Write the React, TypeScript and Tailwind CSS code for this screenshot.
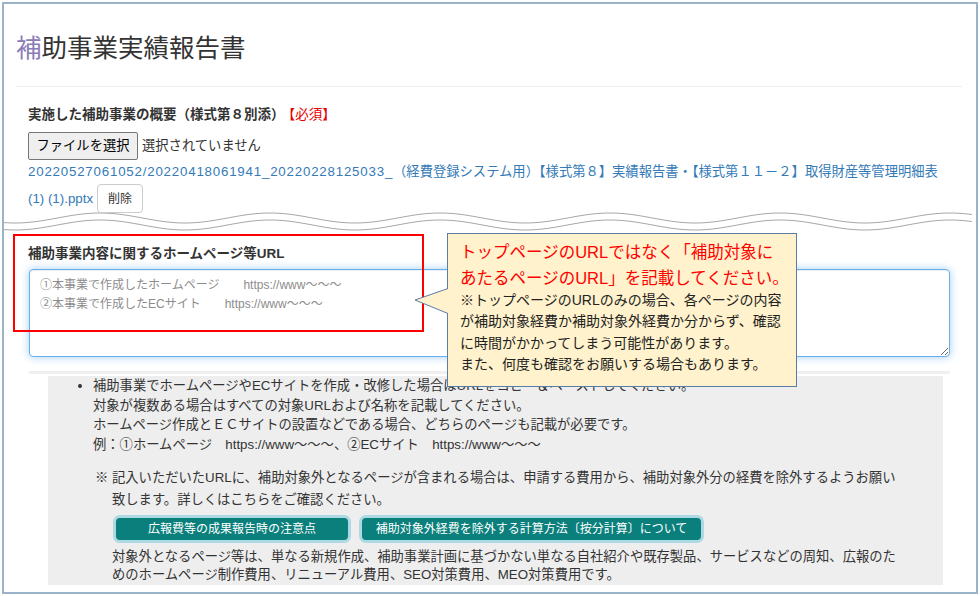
import React from 'react';

const wavePath = (y0: number) => {
  let d = '';
  for (let x = 0; x <= 968; x += 4) {
    const y = y0 - 5 * Math.sin((2 * Math.PI * (x + 4 - 57.5)) / 170);
    d += `${x === 0 ? 'M' : 'L'}${x} ${y.toFixed(2)} `;
  }
  return d;
};

const Callout = () => (
  <div className="absolute left-[443px] top-[229px] h-[154px] w-[350px] border border-[#5b7ca5] bg-[#fff2cc] pl-[12px] pt-[5px]">
    <svg className="absolute left-[-34px] top-[50px]" width="37" height="34" viewBox="0 0 37 34">
      <polygon points="37,4.5 34,4.5 1,16 34,29.5 37,29.5" fill="#fff2cc" />
      <polyline points="34,4.5 1,16 34,29.5" fill="none" stroke="#5b7ca5" strokeWidth="1" />
    </svg>
    <div className="whitespace-nowrap text-[16.5px] leading-[26px] text-[#ff0000]">
      トップページのURLではなく「補助対象に
      <br />
      あたるページのURL」を記載してください。
    </div>
    <div className="mt-[-1px] whitespace-nowrap text-[14px] leading-[21.3px] text-[#222]">
      ※トップページのURLのみの場合、各ページの内容
      <br />
      が補助対象経費か補助対象外経費か分からず、確認
      <br />
      に時間がかかってしまう可能性があります。
      <br />
      また、何度も確認をお願いする場合もあります。
    </div>
  </div>
);

export default function App() {
  return (
    <div className="h-[596px] w-[980px] overflow-hidden bg-white font-['Liberation_Sans','Noto_Sans_CJK_JP',sans-serif] text-[#333]">
      <div className="relative ml-[2px] mt-[2px] h-[592px] w-[976px] border-2 border-[#9ab3c9] bg-white">
        <div className="pl-[12px]">
          <h1 className="mt-[29px] text-[25.5px] leading-[30px] text-[#333]">
            <span className="text-[#8a7db8]">補</span>助事業実績報告書
          </h1>
          <div className="mt-[23px] h-px w-[946px] bg-[#eeeeee]" />

          <div className="pl-[12px]">
            <div className="mt-[18px] text-[13.5px] font-bold leading-[20px] text-[#333]">
              実施した補助事業の概要（様式第８別添）
              <span className="ml-[4px] font-normal text-[#e60000]">【必須】</span>
            </div>
            <div className="mt-[7px] flex h-[28px] items-center">
              <button className="h-[28px] w-[110px] rounded-[2px] border border-[#767676] bg-[#efefef] text-[13.3px] text-black">
                ファイルを選択
              </button>
              <span className="ml-[4px] text-[13.3px] text-[#333]">選択されていません</span>
            </div>
            <div className="mt-[2px] whitespace-nowrap text-[13.3px] leading-[20px] text-[#337ab7]">
              <span className="tracking-[0.8px]">20220527061052/20220418061941_20220228125033_</span>
              （経費登録システム用）【様式第８】実績報告書・【様式第１１－２】取得財産等管理明細表
            </div>
            <div className="mt-[2px] flex h-[29px] items-center">
              <span className="text-[13.3px] text-[#337ab7]">(1) (1).pptx</span>
              <button className="relative z-10 ml-[4px] h-[29px] w-[46px] rounded-[4px] border border-[#cccccc] bg-white text-[12px] text-[#333]">
                削除
              </button>
            </div>

            <div className="mt-[31px] text-[13.5px] font-bold leading-[20px] text-[#333]">
              補助事業内容に関するホームページ等URL
            </div>
            <textarea
              className="mt-[5px] ml-[1px] block h-[88px] w-[921px] rounded-[4px] border border-[#66afe9] px-[10px] py-[6px] text-[12px] leading-[19px] text-[#333] shadow-[inset_0_1px_1px_rgba(0,0,0,0.075),0_0_8px_rgba(102,175,233,0.6)] outline-none placeholder:text-[#8c8c8c]"
              placeholder={'①本事業で作成したホームページ　　https://www～～～\n②本事業で作成したECサイト　　https://www～～～'}
            />
            <div className="ml-[1px] mt-[14px] h-[3px] w-[921px] bg-[#f0f0f0]" />

            <div className="ml-[20px] mt-[2px] h-[209px] w-[895px] bg-[#eeeeee] text-[13.3px] text-[#333]">
              <ul className="list-disc pl-[45px] leading-[19.7px]">
                <li className="whitespace-nowrap">
                  補助事業でホームページやECサイトを作成・改修した場合はURLをコピー＆ペーストしてください。
                  <br />
                  対象が複数ある場合はすべての対象URLおよび名称を記載してください。
                  <br />
                  ホームページ作成とＥＣサイトの設置などである場合、どちらのページも記載が必要です。
                  <br />
                  例：①ホームページ　https://www～～～、②ECサイト　https://www～～～
                </li>
              </ul>
              <div className="pl-[64px]">
                <div className="mt-[12px] whitespace-nowrap indent-[-17px] leading-[22px]">
                  ※ 記入いただいたURLに、補助対象外となるページが含まれる場合は、申請する費用から、補助対象外分の経費を除外するようお願い
                  <br />
                  致します。詳しくはこちらをご確認ください。
                </div>
                <div className="mt-[4px] flex gap-[8px] pl-[1px]">
                  <button className="h-[28px] w-[238px] rounded-[7px] border-[3px] border-[#acd9e4] bg-[#0a7f7c] text-[12px] text-white">
                    広報費等の成果報告時の注意点
                  </button>
                  <button className="h-[28px] w-[345px] rounded-[7px] border-[3px] border-[#acd9e4] bg-[#0a7f7c] text-[12px] text-white">
                    補助対象外経費を除外する計算方法〔按分計算〕について
                  </button>
                </div>
                <div className="mt-[5px] whitespace-nowrap leading-[18.5px]">
                  対象外となるページ等は、単なる新規作成、補助事業計画に基づかない単なる自社紹介や既存製品、サービスなどの周知、広報のた
                  <br />
                  めのホームページ制作費用、リニューアル費用、SEO対策費用、MEO対策費用です。
                </div>
              </div>
            </div>
          </div>
        </div>

        <svg className="absolute left-0 top-[201px]" width="970" height="30" viewBox="0 0 970 30">
          <path d={wavePath(13)} fill="none" stroke="#a8a8a8" strokeWidth="1" />
          <path d={wavePath(20)} fill="none" stroke="#a8a8a8" strokeWidth="1" />
        </svg>

        <div className="absolute left-[9px] top-[230px] h-[98px] w-[411px] border-2 border-[#ff0000]" />

        <Callout />
      </div>
    </div>
  );
}
